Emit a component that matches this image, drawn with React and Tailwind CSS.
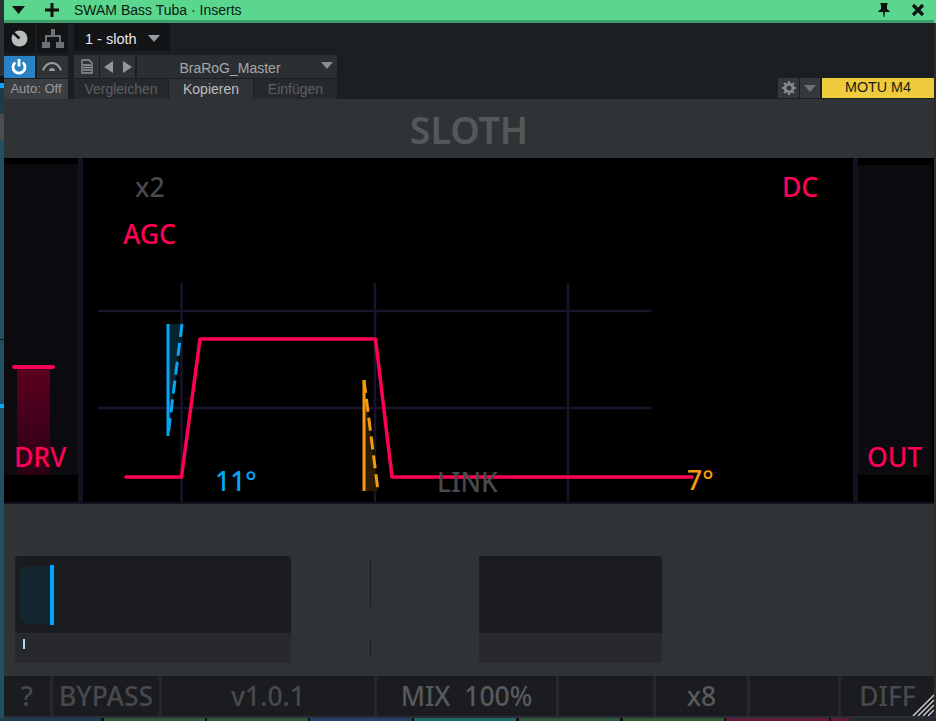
const sans = "font-['Liberation_Sans',Arial,sans-serif]";
const noto = "font-['Noto_Sans','Open_Sans',sans-serif]";

function Tri({ className }) {
  return (
    <svg width="12" height="7" viewBox="0 0 12 7" className={className}>
      <path d="M0 0h12L6 7z" fill="currentColor" />
    </svg>
  );
}

function TitleBar() {
  return (
    <div className="flex h-[23px] items-center bg-[#5bd68f] border-b-[3px] border-[#3e9d69] text-[#0b1a12]">
      <div className="flex w-[21px] justify-end">
        <svg width="13" height="8" viewBox="0 0 13 8"><path d="M0 0h13L6.5 8z" fill="#111" /></svg>
      </div>
      <div className="ml-[20px] flex w-[14px] justify-center">
        <svg width="14" height="14" viewBox="0 0 14 14"><path d="M5.500 0h3v5.500H14v3H8.500V14h-3V8.500H0v-3h5.500z" fill="#111" /></svg>
      </div>
      <span className={`${sans} ml-[15px] text-[14px] leading-none`}>SWAM Bass Tuba · Inserts</span>
      <div className="ml-auto flex items-center">
        <svg width="12" height="14" viewBox="0 0 12 14" className="mr-[21px]">
          <path d="M2.500 0h7v1.500L9 2v4l2.500 2v1h-4.500l-.6 5h-.8l-.6-5H.500V8L3 6V2l-.5-.5z" fill="#111" />
        </svg>
        <svg width="14" height="14" viewBox="0 0 14 14" className="mr-[9px]">
          <path d="M2 2l10 10M12 2L2 12" stroke="#111" strokeWidth="3.200" />
        </svg>
      </div>
    </div>
  );
}

function ToolBar() {
  return (
    <div className={`${sans} flex h-[76px] bg-[#1c1f22]`}>
      <div className="flex w-[64px] flex-col">
        <div className="flex h-[30px] gap-[2px]">
          <div className="flex w-[32px] items-center justify-center bg-[#121416] pt-[2px]">
            <svg width="17" height="17" viewBox="0 0 17 17">
              <circle cx="8.500" cy="8.500" r="8" fill="#b9bcbd" />
              <path d="M2 2.500l6.500 6" stroke="#121416" strokeWidth="2.400" />
            </svg>
          </div>
          <div className="flex w-[31px] items-center justify-center bg-[#121416] pt-[2px]">
            <svg width="24" height="20" viewBox="0 0 24 20" fill="#6f7274">
              <path d="M10 0h4v7h-4zM4 6h16v2H4zM4 6h2v7H4zM18 6h2v7h-2zM1 13h8v6H1zM15 13h8v6h-8z" />
            </svg>
          </div>
        </div>
        <div className="mt-[3px] flex h-[23px] gap-[2px]">
          <div className="flex w-[31px] items-center justify-center bg-[#2a82c4]">
            <svg width="16" height="16" viewBox="0 0 16 16" fill="none" stroke="#fff" strokeWidth="2.800">
              <path d="M4.300 3.500a6 6 0 1 0 7.400 0M8 0v7.500" />
            </svg>
          </div>
          <div className="flex w-[32px] items-center justify-center bg-[#2f3336]">
            <svg width="20" height="10" viewBox="0 0 20 10" fill="none" stroke="#9a9d9f" strokeWidth="2">
              <path d="M1 8.500C3 3 6 1 10 1s7 2 9 7.500" />
              <path d="M7 9a3 3 0 0 1 6 0z" fill="#9a9d9f" stroke="none" />
            </svg>
          </div>
        </div>
        <div className="mt-[1px] flex h-[20px] w-[64px] items-center justify-center bg-[#3b3f42] text-[13px] text-[#9a9da0]">Auto: Off</div>
      </div>

      <div className="ml-[6px] flex w-[263px] flex-col">
        <div className="flex h-[29px] w-[96px] items-center bg-[#121416] pt-[5px] text-[14.500px] text-[#e8e9ea]">
          <span className="ml-[11px]">1 - sloth</span>
          <Tri className="ml-[11px] mb-[3px] text-[#9a9d9f]" />
        </div>
        <div className="mt-[4px] flex h-[23px] gap-[1px]">
          <div className="flex w-[25px] items-center justify-center bg-[#2f3336]">
            <svg width="12" height="15" viewBox="0 0 12 15" fill="none" stroke="#94979a" strokeWidth="1.300">
              <path d="M1 1h7l3 3v10H1zM2 6h8M2 8.500h8M2 11h8" />
            </svg>
          </div>
          <div className="flex w-[35px] items-center justify-center gap-[10px] bg-[#2f3336]">
            <svg width="9" height="12" viewBox="0 0 9 12"><path d="M9 0v12L0 6z" fill="#94979a" /></svg>
            <svg width="9" height="12" viewBox="0 0 9 12"><path d="M0 0v12l9-6z" fill="#94979a" /></svg>
          </div>
          <div className="relative ml-[1px] flex flex-1 items-center justify-center bg-[#2b2f32] pt-[3px] text-[14px] text-[#a5a8aa]">
            <span className="mr-[14px]">BraRoG_Master</span>
            <Tri className="absolute right-[4px] top-[7px] text-[#8a8d90]" />
          </div>
        </div>
        <div className="mt-[1px] flex h-[20px] gap-[1px] text-[14px]">
          <div className="flex w-[94px] items-center justify-center bg-[#26292c] text-[#5d6063]">Vergleichen</div>
          <div className="flex w-[84px] items-center justify-center bg-[#2e3235] text-[#bcbfc1]">Kopieren</div>
          <div className="flex flex-1 items-center justify-center bg-[#26292c] text-[#5d6063]">Einfügen</div>
        </div>
      </div>

      <div className="ml-auto flex items-end pb-[1px]">
        <div className="flex h-[20px] w-[21px] items-center justify-center bg-[#34383a]">
          <svg width="14" height="14" viewBox="0 0 14 14">
            <circle cx="7" cy="7" r="4" fill="none" stroke="#85888a" strokeWidth="2.800" />
            <path d="M7 0v14M0 7h14M2 2l10 10M12 2L2 12" stroke="#85888a" strokeWidth="2" strokeDasharray="2.500 9 2.500 0" />
          </svg>
        </div>
        <div className="ml-[1px] flex h-[20px] w-[20px] items-center justify-center bg-[#34383a]">
          <Tri className="text-[#6f7274]" />
        </div>
        <div className="ml-[2px] flex h-[20px] w-[112px] items-center justify-center bg-[#edcb3c] text-[14.300px] text-[#1a1a12]">MOTU M4</div>
      </div>
    </div>
  );
}

function Graph() {
  return (
    <svg width="930" height="346" viewBox="4 158 930 346" className="block">
      <g stroke="#17152a" strokeWidth="2.500">
        <path d="M98 311H652M98 408H652" />
        <path d="M181.500 283V503M375 283V503M568 283V503" />
      </g>

      <path d="M168 324H183L168 436z" fill="#06242f" />
      <path d="M168 324V436" stroke="#06a6f5" strokeWidth="3" />
      <path d="M182 324L168 436" stroke="#06a6f5" strokeWidth="3" strokeDasharray="13 6" fill="none" />

      <path d="M364 380L378 491H364z" fill="#2b1a04" />
      <path d="M364 380V491" stroke="#f79a0c" strokeWidth="3" />
      <path d="M364 380L378 491" stroke="#f79a0c" strokeWidth="3" strokeDasharray="13 6" fill="none" />

      <path
        d="M126 477H181.500L200 339H375.500L392 477H692"
        fill="none"
        stroke="#ff0055"
        strokeWidth="3.500"
        strokeLinecap="round"
        strokeLinejoin="round"
      />
    </svg>
  );
}

function Canvas() {
  const label = 'absolute text-[26.500px] font-medium leading-none';
  return (
    <div className={`${noto} relative h-[346px] overflow-hidden bg-black`}>
      <Graph />

      <div className="absolute left-[74px] top-0 h-full w-[5px] bg-[#14121f]" />
      <div className="absolute left-[849px] top-0 h-full w-[5px] bg-[#14121f]" />
      <div className="absolute bottom-0 left-0 h-[2px] w-full bg-[#14121f]" />

      {/* side meters */}
      <div className="absolute left-0 top-[6px] h-[311px] w-[74px] bg-[#0b0a0e]">
        <div className="absolute bottom-0 left-[13px] h-[108px] w-[33px] bg-gradient-to-b from-[#5c0020] to-[#2c0014]" />
        <div className="absolute left-[8px] top-[201px] h-[4px] w-[43px] rounded-full bg-[#ff0055]" />
        <span className={`${label} left-[10px] top-[280px] text-[#ff0055]`}>DRV</span>
      </div>
      <div className="absolute left-[854px] top-[7px] h-[310px] w-[74px] bg-[#0b0a0e]">
        <span className={`${label} left-[9px] top-[279px] text-[#ff0055]`}>OUT</span>
      </div>

      <span className={`${label} left-[131px] top-[16px] text-[#47494d]`}>x2</span>
      <span className={`${label} left-[119px] top-[63px] text-[#ff0055]`}>AGC</span>
      <span className={`${label} left-[778px] top-[16px] text-[#ff0055]`}>DC</span>
      <span className={`${label} left-[211px] top-[310px] text-[#06a6f5]`}>11°</span>
      <span className={`${label} left-[433px] top-[311px] text-[#47494d]`}>LINK</span>
      <span className={`${label} left-[683px] top-[309px] text-[#f79a0c]`}>7°</span>
    </div>
  );
}

function Controls() {
  return (
    <div className="relative flex h-[172px] items-start bg-[#2f3336] pl-[11px] pt-[52px]">
      <div className="h-[107px] w-[276px] overflow-hidden rounded-tr-[4px] rounded-tl-[4px] bg-[#27292c]">
        <div className="h-[77px] bg-[#1a1c1f] pl-[5px] pt-[9px]">
          <div className="flex h-[60px] w-[34px]">
            <div className="mt-[1px] h-[58px] w-[30px] rounded-l-[8px] bg-[#14262f]" />
            <div className="w-[4px] bg-[#00a6ff]" />
          </div>
        </div>
        <div className="ml-[8px] mt-[6px] h-[10px] w-[2px] bg-[#a5dcf8]" />
      </div>

      <div className="ml-[79px] mt-[3px] w-px">
        <div className="h-[48px] bg-[#1b1d20]" />
        <div className="mt-[32px] h-[17px] bg-[#1b1d20]" />
      </div>

      <div className="ml-[108px] h-[107px] w-[183px] overflow-hidden rounded-tr-[4px] bg-[#27292c]">
        <div className="h-[77px] bg-[#1a1c1f]" />
      </div>
    </div>
  );
}

function Footer() {
  const cell = 'flex items-center justify-center bg-[#1a1c1f]';
  const dim = 'text-[#47494d]';
  const lit = 'text-[#57595d]';
  return (
    <div className={`${noto} relative flex h-[40px] gap-[3px] bg-[#26282b] text-[26.500px] font-medium leading-none`}>
      <div className={`${cell} ${dim} w-[46px]`}>?</div>
      <div className={`${cell} ${dim} w-[106px]`}>BYPASS</div>
      <div className={`${cell} ${dim} w-[212px]`}>v1.0.1</div>
      <div className={`${cell} ${lit} w-[179px] whitespace-pre`}>MIX  100%</div>
      <div className={`${cell} w-[94px]`} />
      <div className={`${cell} ${lit} w-[91px]`}>x8</div>
      <div className={`${cell} w-[88px]`} />
      <div className={`${cell} ${dim} flex-1`}>DIFF</div>
      <svg width="22" height="22" viewBox="0 0 22 22" className="absolute bottom-0 right-0">
        <path d="M22 1L1 22M22 6L6 22M22 11L11 22M22 16L16 22" stroke="#c8cacb" strokeWidth="1.500" />
      </svg>
    </div>
  );
}

function BottomStrip() {
  const gap = 'w-[2px] bg-[#0e1012]';
  return (
    <div className="flex h-[3px]">
      <div className="w-[101px] bg-[#1d3f50]" />
      <div className="w-[3px] bg-[#0e1012]" />
      <div className="w-[101px] bg-[#2d5a3a]" />
      <div className={gap} />
      <div className="w-[101px] bg-[#2d5a3a]" />
      <div className={gap} />
      <div className="w-[102px] bg-[#27406a]" />
      <div className={gap} />
      <div className="w-[102px] bg-[#1d6a66]" />
      <div className="w-[3px] bg-[#0e1012]" />
      <div className="w-[101px] bg-[#2d5a3a]" />
      <div className="w-[3px] bg-[#0e1012]" />
      <div className="w-[101px] bg-[#36592f]" />
      <div className={gap} />
      <div className="w-[103px] bg-[#641a38]" />
      <div className={gap} />
      <div className="w-[18px] bg-[#641a38]" />
      <div className="flex-1 bg-[#26292c]" />
    </div>
  );
}

export default function App() {
  return (
    <div className="flex h-[721px] w-[936px] flex-col overflow-hidden bg-[#1c1f22]">
      <div className="flex h-[718px]">
        <div className="flex w-[4px] flex-col">
          <div className="h-[76px] bg-[#2b3033]" />
          <div className="h-[7px] bg-[#101214]" />
          <div className="h-[5px] bg-[#06a6f5]" />
          <div className="h-[26px] bg-[#1d3c4a]" />
          <div className="h-[26px] bg-[#4a4e50]" />
          <div className="h-[199px] bg-[#23505e]" />
          <div className="h-px bg-[#101214]" />
          <div className="h-[64px] bg-[#23505e]" />
          <div className="h-[4px] bg-[#06a6f5]" />
          <div className="flex-1 bg-[#23505e]" />
        </div>
        <div className="flex w-[930px] flex-col">
          <TitleBar />
          <ToolBar />
          <div className="flex h-[59px] items-center justify-center bg-[#2f3336] pt-[2px]">
            <span className={`${noto} text-[37.500px] font-semibold leading-none text-[#55585b]`}>SLOTH</span>
          </div>
          <Canvas />
          <Controls />
          <Footer />
          <div className="h-[2px] bg-[#2a2c3a]" />
        </div>
        <div className="flex w-[2px] flex-col bg-[#2a2d30]">
          <div className="h-[23px] bg-[#5bd68f]" />
        </div>
      </div>
      <BottomStrip />
    </div>
  );
}
